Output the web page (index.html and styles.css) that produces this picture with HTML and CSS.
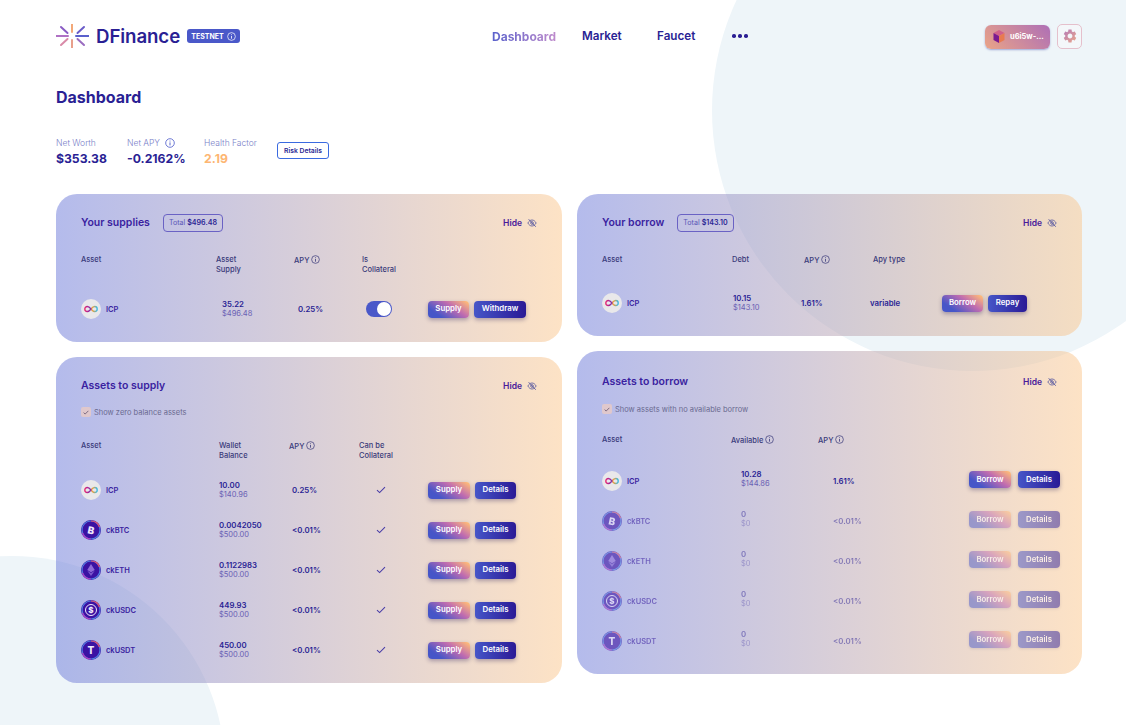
FILE: index.html
```html
<!DOCTYPE html>
<html lang="en">
<head>
<meta charset="utf-8">
<title>DFinance Dashboard</title>
<link rel="stylesheet" href="styles.css">
</head>
<body>
<svg class="defs" aria-hidden="true">
  <defs>
    <linearGradient id="inf" x1="0" x2="1" y1="0" y2="0"><stop offset="0" stop-color="#e8206f"/><stop offset=".45" stop-color="#7a2fb0"/><stop offset=".6" stop-color="#f8a030"/><stop offset="1" stop-color="#30b8e8"/></linearGradient>
    <linearGradient id="gearg" x1="0" x2="1" y1="0" y2="1"><stop offset="0" stop-color="#b57ab8"/><stop offset="1" stop-color="#eaa68a"/></linearGradient>
    <symbol id="info" viewBox="0 0 10 10"><circle cx="5" cy="5" r="4.3" fill="none" stroke="currentColor" stroke-width=".8"/><path d="M5 4.400v3M5 2.600v.9" stroke="currentColor" stroke-width=".9" fill="none"/></symbol>
    <symbol id="eye" viewBox="0 0 12 12"><path d="M1 6c1.400-2.400 3-3.600 5-3.600S9.600 3.600 11 6c-1.400 2.400-3 3.600-5 3.600S2.400 8.400 1 6z" fill="none" stroke="currentColor" stroke-width="1"/><circle cx="6" cy="6" r="1.600" fill="none" stroke="currentColor" stroke-width="1"/><path d="M2 1.500l8.500 9" stroke="currentColor" stroke-width="1.100"/></symbol>
    <symbol id="check" viewBox="0 0 10 8"><path d="M1 4.200l2.600 2.400L9 1.200" fill="none" stroke="currentColor" stroke-width="1.100"/></symbol>
    <symbol id="icp" viewBox="0 0 20 20"><circle cx="10" cy="10" r="10" fill="#e9e8ea"/><path d="M10 10C8.600 8.200 7.500 7.500 6.300 7.500a2.500 2.500 0 0 0 0 5c1.200 0 2.300-.7 3.700-2.500s2.500-2.500 3.700-2.500a2.500 2.500 0 0 1 0 5c-1.200 0-2.300-.7-3.700-2.500z" fill="none" stroke="url(#inf)" stroke-width="1.300"/></symbol>
    <symbol id="ring" viewBox="0 0 20 20"><circle cx="10" cy="10" r="10" fill="#3b12a3"/><circle cx="10" cy="10" r="9" fill="none" stroke="#4f7fe0" stroke-width="1.200"/><path d="M10 1a9 9 0 0 1 8.500 6" fill="none" stroke="#e8506a" stroke-width="1.200"/><path d="M10 19a9 9 0 0 1-8.500-6" fill="none" stroke="#b03ac0" stroke-width="1.200"/></symbol>
  </defs>
</svg>
<div class="page">
  <div class="blob blob-top"></div>
  <div class="blob blob-bottom"></div>
  <div class="content">
    <header class="topbar">
      <div class="brand">
        <svg class="logo" viewBox="0 0 33 24" aria-hidden="true">
          <path class="r1" d="M0 12h12"/><path class="r2" d="M20 12h13"/><path class="r3" d="M16 0v8"/><path class="r4" d="M16 16v8"/><path class="r5" d="M5 3l6.500 6"/><path class="r6" d="M28 3l-6.500 6"/><path class="r7" d="M5 21l6.500-6"/><path class="r8" d="M28 21l-6.500-6"/>
        </svg>
        <span class="brand-name">DFinance</span>
        <span class="badge">TESTNET <svg class="ico-info"><use href="#info"/></svg></span>
      </div>
      <nav class="nav">
        <a class="nav-item active">Dashboard</a>
        <a class="nav-item">Market</a>
        <a class="nav-item">Faucet</a>
        <span class="dots"><i></i><i></i><i></i></span>
      </nav>
      <div class="tools">
        <button class="wallet">
          <svg class="cube" viewBox="0 0 12 13" aria-hidden="true"><path d="M6 0l5.500 3L6 6 .5 3z" fill="#d0608a"/><path d="M.5 3L6 6v7L.5 10z" fill="#7a1a90"/><path d="M11.500 3L6 6v7l5.500-3z" fill="#e87a50"/></svg>
          <span>u6i5w-...</span>
        </button>
        <button class="gear" aria-label="Settings">
          <svg viewBox="0 0 24 24"><path fill="url(#gearg)" d="M19.140 12.940c.04-.3.06-.61.06-.94 0-.32-.02-.64-.07-.94l2.030-1.580c.18-.14.23-.41.12-.61l-1.920-3.320c-.12-.22-.37-.29-.59-.22l-2.390.96c-.5-.38-1.030-.7-1.620-.94l-.36-2.540c-.04-.24-.24-.41-.48-.41h-3.840c-.24 0-.43.17-.47.41l-.36 2.540c-.59.24-1.130.57-1.620.94l-2.390-.96c-.22-.08-.47 0-.59.22L2.740 8.870c-.12.21-.08.47.12.61l2.030 1.580c-.05.3-.09.63-.09.94s.02.64.07.94l-2.030 1.580c-.18.14-.23.41-.12.61l1.920 3.320c.12.22.37.29.59.22l2.390-.96c.5.38 1.030.7 1.620.94l.36 2.540c.05.24.24.41.48.41h3.840c.24 0 .44-.17.47-.41l.36-2.540c.59-.24 1.130-.56 1.620-.94l2.390.96c.22.08.47 0 .59-.22l1.920-3.320c.12-.22.07-.47-.12-.61l-2.010-1.580zM12 15.600c-1.980 0-3.600-1.620-3.600-3.600s1.620-3.600 3.600-3.600 3.600 1.620 3.600 3.600-1.620 3.600-3.600 3.600z"/></svg>
        </button>
      </div>
    </header>

    <h1 class="page-title">Dashboard</h1>

    <section class="stats">
      <div class="stat s1"><div class="stat-label">Net Worth</div><div class="stat-value">$353.38</div></div>
      <div class="stat s2"><div class="stat-label">Net APY <svg class="ico-info lg"><use href="#info"/></svg></div><div class="stat-value">-0.2162%</div></div>
      <div class="stat s3"><div class="stat-label">Health Factor</div><div class="stat-value orange">2.19</div></div>
      <button class="risk">Risk Details</button>
    </section>

    <main class="columns">
      <div class="column">
        <section class="card supplies">
          <div class="card-head"><h2>Your supplies</h2><span class="total">Total <b>$496.48</b></span><span class="hide">Hide <svg class="ico-eye"><use href="#eye"/></svg></span></div>
          <div class="row labels">
            <div>Asset</div><div class="wrap">Asset Supply</div><div>APY <svg class="ico-info"><use href="#info"/></svg></div><div class="wrap">Is Collateral</div>
          </div>
          <div class="row item">
            <div class="asset"><svg class="coin"><use href="#icp"/></svg>ICP</div>
            <div class="val off6"><b>35.22</b><small>$496.48</small></div>
            <div class="pct off4">0.25%</div>
            <div class="off4"><span class="toggle"><i></i></span></div>
            <div class="actions"><button class="btn grad w41">Supply</button><button class="btn solid w52">Withdraw</button></div>
          </div>
        </section>

        <section class="card to-supply">
          <div class="card-head"><h2>Assets to supply</h2><span class="hide">Hide <svg class="ico-eye"><use href="#eye"/></svg></span></div>
          <label class="show"><span class="box"><svg><use href="#check"/></svg></span>Show zero balance assets</label>
          <div class="row labels">
            <div>Asset</div><div class="wrap">Wallet Balance</div><div>APY <svg class="ico-info"><use href="#info"/></svg></div><div class="wrap">Can be Collateral</div>
          </div>
          <div class="row item">
            <div class="asset"><svg class="coin"><use href="#icp"/></svg>ICP</div>
            <div class="val"><b>10.00</b><small>$140.96</small></div><div class="pct off3">0.25%</div><div class="tick"><svg><use href="#check"/></svg></div>
            <div class="actions"><button class="btn grad w42">Supply</button><button class="btn solid w41">Details</button></div>
          </div>
          <div class="row item">
            <div class="asset"><span class="coin-wrap"><svg class="coin"><use href="#ring"/></svg><span class="glyph tilt">B</span></span>ckBTC</div>
            <div class="val"><b>0.0042050</b><small>$500.00</small></div><div class="pct off3">&lt;0.01%</div><div class="tick"><svg><use href="#check"/></svg></div>
            <div class="actions"><button class="btn grad w42">Supply</button><button class="btn solid w41">Details</button></div>
          </div>
          <div class="row item">
            <div class="asset"><span class="coin-wrap"><svg class="coin"><use href="#ring"/></svg><svg class="eth" viewBox="0 0 10 16"><path d="M5 0l5 8-5 3-5-3z" fill="#8f6bd8"/><path d="M5 12l5-3-5 7-5-7z" fill="#7a58cc"/></svg></span>ckETH</div>
            <div class="val"><b>0.1122983</b><small>$500.00</small></div><div class="pct off3">&lt;0.01%</div><div class="tick"><svg><use href="#check"/></svg></div>
            <div class="actions"><button class="btn grad w42">Supply</button><button class="btn solid w41">Details</button></div>
          </div>
          <div class="row item">
            <div class="asset"><span class="coin-wrap"><svg class="coin"><use href="#ring"/></svg><span class="glyph usd">$</span></span>ckUSDC</div>
            <div class="val"><b>449.93</b><small>$500.00</small></div><div class="pct off3">&lt;0.01%</div><div class="tick"><svg><use href="#check"/></svg></div>
            <div class="actions"><button class="btn grad w42">Supply</button><button class="btn solid w41">Details</button></div>
          </div>
          <div class="row item">
            <div class="asset"><span class="coin-wrap"><svg class="coin"><use href="#ring"/></svg><span class="glyph">T</span></span>ckUSDT</div>
            <div class="val"><b>450.00</b><small>$500.00</small></div><div class="pct off3">&lt;0.01%</div><div class="tick"><svg><use href="#check"/></svg></div>
            <div class="actions"><button class="btn grad w42">Supply</button><button class="btn solid w41">Details</button></div>
          </div>
        </section>
      </div>

      <div class="column">
        <section class="card borrows">
          <div class="card-head"><h2>Your borrow</h2><span class="total">Total <b>$143.10</b></span><span class="hide">Hide <svg class="ico-eye"><use href="#eye"/></svg></span></div>
          <div class="row labels">
            <div>Asset</div><div>Debt</div><div>APY <svg class="ico-info"><use href="#info"/></svg></div><div>Apy type</div>
          </div>
          <div class="row item">
            <div class="asset"><svg class="coin"><use href="#icp"/></svg>ICP</div>
            <div class="val"><b>10.15</b><small>$143.10</small></div>
            <div class="pct">1.61%</div>
            <div class="pct">variable</div>
            <div class="actions"><button class="btn grad w41">Borrow</button><button class="btn solid w39">Repay</button></div>
          </div>
        </section>

        <section class="card to-borrow">
          <div class="card-head"><h2>Assets to borrow</h2><span class="hide">Hide <svg class="ico-eye"><use href="#eye"/></svg></span></div>
          <label class="show"><span class="box"><svg><use href="#check"/></svg></span>Show assets with no available borrow</label>
          <div class="row labels">
            <div>Asset</div><div>Available <svg class="ico-info"><use href="#info"/></svg></div><div>APY <svg class="ico-info"><use href="#info"/></svg></div>
          </div>
          <div class="row item">
            <div class="asset"><svg class="coin"><use href="#icp"/></svg>ICP</div>
            <div class="val"><b>10.28</b><small>$144.86</small></div><div class="pct">1.61%</div>
            <div class="actions"><button class="btn grad w42">Borrow</button><button class="btn solid w42">Details</button></div>
          </div>
          <div class="row item muted">
            <div class="asset"><span class="coin-wrap"><svg class="coin"><use href="#ring"/></svg><span class="glyph tilt">B</span></span>ckBTC</div>
            <div class="val"><b>0</b><small>$0</small></div><div class="pct">&lt;0.01%</div>
            <div class="actions"><button class="btn grad w42">Borrow</button><button class="btn solid w42">Details</button></div>
          </div>
          <div class="row item muted">
            <div class="asset"><span class="coin-wrap"><svg class="coin"><use href="#ring"/></svg><svg class="eth" viewBox="0 0 10 16"><path d="M5 0l5 8-5 3-5-3z" fill="#8f6bd8"/><path d="M5 12l5-3-5 7-5-7z" fill="#7a58cc"/></svg></span>ckETH</div>
            <div class="val"><b>0</b><small>$0</small></div><div class="pct">&lt;0.01%</div>
            <div class="actions"><button class="btn grad w42">Borrow</button><button class="btn solid w42">Details</button></div>
          </div>
          <div class="row item muted">
            <div class="asset"><span class="coin-wrap"><svg class="coin"><use href="#ring"/></svg><span class="glyph usd">$</span></span>ckUSDC</div>
            <div class="val"><b>0</b><small>$0</small></div><div class="pct">&lt;0.01%</div>
            <div class="actions"><button class="btn grad w42">Borrow</button><button class="btn solid w42">Details</button></div>
          </div>
          <div class="row item muted">
            <div class="asset"><span class="coin-wrap"><svg class="coin"><use href="#ring"/></svg><span class="glyph">T</span></span>ckUSDT</div>
            <div class="val"><b>0</b><small>$0</small></div><div class="pct">&lt;0.01%</div>
            <div class="actions"><button class="btn grad w42">Borrow</button><button class="btn solid w42">Details</button></div>
          </div>
        </section>
      </div>
    </main>
  </div>
</div>
</body>
</html>
```

FILE: styles.css
```css
* { box-sizing: border-box; }
html, body { margin: 0; padding: 0; }
body { font-family: "Inter", "Liberation Sans", sans-serif; color: #2a1a8e; background: #fff; }
.defs { position: absolute; width: 0; height: 0; }
.page { position: relative; width: 100%; height: 725px; overflow: hidden; }
.blob { position: absolute; border-radius: 50%; background: #eef5f9; }
.blob-top { left: 712px; top: -150px; width: 521px; height: 521px; }
.blob-bottom { left: -201px; top: 556px; width: 426px; height: 426px; }
.content { position: relative; padding: 0 44px 0 56px; }

.topbar { display: flex; align-items: center; height: 72px; }
.brand { display: flex; align-items: center; width: 436px; }
.logo { width: 33px; height: 24px; fill: none; stroke-width: 2; stroke-linecap: round; }
.r1 { stroke: #b071c4; } .r2 { stroke: #5a60cc; } .r3 { stroke: #f3a878; } .r4 { stroke: #e8a08c; }
.r5 { stroke: #8a5cc4; } .r6 { stroke: #6a5cc8; } .r7 { stroke: #d98aa8; } .r8 { stroke: #9a6cc0; }
.brand-name { margin-left: 7px; font-size: 18.700px; font-weight: 600; color: #2a1f94; letter-spacing: -.1px; width: 91px; }
.badge { display: inline-flex; align-items: center; gap: 3px; height: 14px; width: 53px; justify-content: center; border-radius: 3px; background: #4a58c9; color: #fff; font-size: 7px; font-weight: 700; }
.ico-info { width: 9px; height: 9px; vertical-align: -1.500px; color: inherit; }
.ico-info.lg { width: 10px; height: 10px; margin-left: 3px; color: #4a58c9; }
.nav { display: grid; grid-template-columns: 90px 75px 75px auto; align-items: center; font-size: 11.700px; font-weight: 600; }
.nav-item { color: #2a1f94; }
.nav-item.active { font-size: 12px; font-weight: 700; background: linear-gradient(90deg, #5a62cc, #e89ccc); -webkit-background-clip: text; background-clip: text; color: transparent; }
.dots { display: flex; gap: 2.500px; }
.dots i { width: 3.500px; height: 3.500px; border-radius: 50%; background: #2a1f94; }
.tools { display: flex; align-items: center; gap: 7px; margin-left: auto; }
.wallet { display: flex; align-items: center; gap: 5px; width: 65px; height: 24px; margin-top: 1px; padding: 0 0 0 8px; border: 0; border-radius: 6px; background: linear-gradient(45deg, #eaa487, #ae6fb6); color: #fff; font: 700 7.500px "Inter", sans-serif; box-shadow: 0 1px 2px rgba(80,90,180,.5); white-space: nowrap; }
.cube { width: 12px; height: 13px; flex: none; }
.gear { display: flex; align-items: center; justify-content: center; width: 25px; height: 25px; padding: 0; border: 1px solid #e5c0cc; border-radius: 5px; background: #f4f7fa; }
.gear svg { width: 16px; height: 16px; }

.page-title { margin: 15px 0 0; font-size: 16px; line-height: 20px; font-weight: 700; color: #2a1f94; }
.stats { display: flex; align-items: flex-start; margin-top: 30px; height: 45px; }
.stat { flex: none; }
.s1 { width: 71px; } .s2 { width: 77px; } .s3 { width: 73px; }
.stat-label { font-size: 8.500px; line-height: 12px; font-weight: 300; color: #7a80c8; white-space: nowrap; }
.stat-value { margin-top: 2px; font-size: 12.200px; line-height: 16px; font-weight: 700; color: #2a1f94; white-space: nowrap; }
.stat-value.orange { color: #fdb672; }
.risk { width: 52px; height: 17px; margin-top: 5px; padding: 0; border: 1px solid #3a6ae0; border-radius: 3px; background: #fff; color: #2a1f94; font: 600 6.800px "Inter", sans-serif; }

.columns { display: grid; grid-template-columns: 506px 505px; gap: 15px; margin-top: 12px; align-items: start; }
.column { display: flex; flex-direction: column; gap: 15px; }
.card { padding: 19px 25px 13px; border-radius: 21px; background: linear-gradient(90deg, rgba(106,120,217,.5), rgba(251,198,140,.5)); }
.card-head { display: flex; align-items: center; min-height: 19px; }
.card-head h2 { margin: 0; font-size: 10.500px; font-weight: 600; color: #3a1fa0; white-space: nowrap; }
.total { display: inline-flex; align-items: center; height: 18px; margin-left: 13px; padding: 0 5px; border: 1px solid #6a62c4; border-radius: 4px; font-size: 7.100px; color: #5a58b8; white-space: nowrap; }
.total b { margin-left: 2px; font-weight: 600; color: #2a1f94; }
.hide { display: flex; align-items: center; gap: 5px; margin-left: auto; font-size: 8.500px; font-weight: 600; color: #4a1a9a; }
.ico-eye { width: 10px; height: 10px; color: #5a5aa0; }

.row { display: grid; }
.supplies .row { grid-template-columns: 135px 78px 68px 66px 1fr; }
.to-supply .row { grid-template-columns: 138px 70px 70px 69px 1fr; }
.borrows .row { grid-template-columns: 130px 72px 69px 69px 1fr; }
.to-borrow .row { grid-template-columns: 129px 87px 138px 1fr; }
.labels { height: 20px; font-size: 7.500px; line-height: 10px; font-weight: 500; color: #3a3a7a; }
.labels .ico-info { color: #3a3a7a; }
.wrap { width: 38px; }
.supplies .labels { margin-top: 23px; margin-bottom: 14px; }
.to-supply .labels { margin-top: 24px; }
.to-supply .labels + .item { margin-top: 9px; }
.to-supply .show { margin-top: 12px; }
.borrows .labels { margin-top: 23px; margin-bottom: 8px; }
.to-borrow { padding-top: 21px; }
.to-borrow .labels { margin-top: 21px; margin-bottom: 6px; }
.to-borrow .item .val { padding-left: 10px; margin-top: -5px; }
.to-borrow .item .pct { padding-left: 15px; margin-top: -1px; }
.borrows .item .val { padding-left: 1px; }
.borrows .item .pct { margin-left: -3px; }

.item { height: 40px; align-items: center; }
.asset { display: flex; align-items: center; gap: 5px; font-size: 7.500px; font-weight: 600; color: #3a1fa0; }
.coin { display: block; width: 20px; height: 20px; flex: none; }
.coin-wrap { position: relative; display: block; width: 20px; height: 20px; flex: none; }
.glyph { position: absolute; inset: 0; display: flex; align-items: center; justify-content: center; font-size: 10px; font-weight: 800; color: #efe6fb; }
.glyph.tilt { transform: rotate(12deg); }
.glyph.usd { font-size: 8px; }
.glyph.usd::after { content: ""; position: absolute; inset: 4px; border: 1px solid #efe6fb; border-radius: 50%; }
.eth { position: absolute; left: 6px; top: 4px; width: 8px; height: 12px; }
.val b { display: block; font-size: 7.800px; line-height: 10px; font-weight: 600; color: #2a1f94; }
.val small { display: block; font-size: 7.500px; line-height: 10px; color: #6a60b4; }
.pct { font-size: 7.800px; font-weight: 600; color: #2a1f94; }
.off6 { padding-left: 6px; } .off4 { padding-left: 4px; } .off3 { padding-left: 3px; }
.toggle { display: block; position: relative; width: 26px; height: 16px; border-radius: 8px; background: #4a58c9; }
.toggle i { position: absolute; right: 1px; top: 1px; width: 14px; height: 14px; border-radius: 50%; background: #fff; }
.tick { padding-left: 17px; color: #4a3ea8; }
.tick svg { display: block; width: 10px; height: 8px; }
.actions { display: flex; gap: 5px; }
.to-borrow .actions { justify-content: flex-end; gap: 7px; margin: -3px -3px 0 0; }
.btn { height: 17px; padding: 0 0 2px; border: 0; border-radius: 4px; color: #fff; font: 600 7.800px "Inter", sans-serif; box-shadow: 0 2px 4px rgba(40,30,90,.35); }
.grad { background: linear-gradient(35deg, #4656c8 22%, #c06cb0 62%, #fdb97a 95%); }
.solid { background: linear-gradient(90deg, #4656c8, #2a1a96); }
.w39 { width: 39px; } .w41 { width: 41px; } .w42 { width: 42px; } .w52 { width: 52px; }
.muted .val, .muted .pct, .muted .btn { opacity: .5; }
.muted .asset { opacity: .6; }
.muted .btn { box-shadow: 0 1px 3px rgba(40,30,90,.25); }

.show { display: flex; align-items: center; gap: 3px; margin-top: 13px; height: 10px; font-size: 7.500px; color: #6a6a90; }
.box { display: flex; align-items: center; justify-content: center; width: 10px; height: 10px; border-radius: 2px; background: #e0c8cc; color: #4a3a5a; }
.box svg { width: 6px; height: 5px; }
```
